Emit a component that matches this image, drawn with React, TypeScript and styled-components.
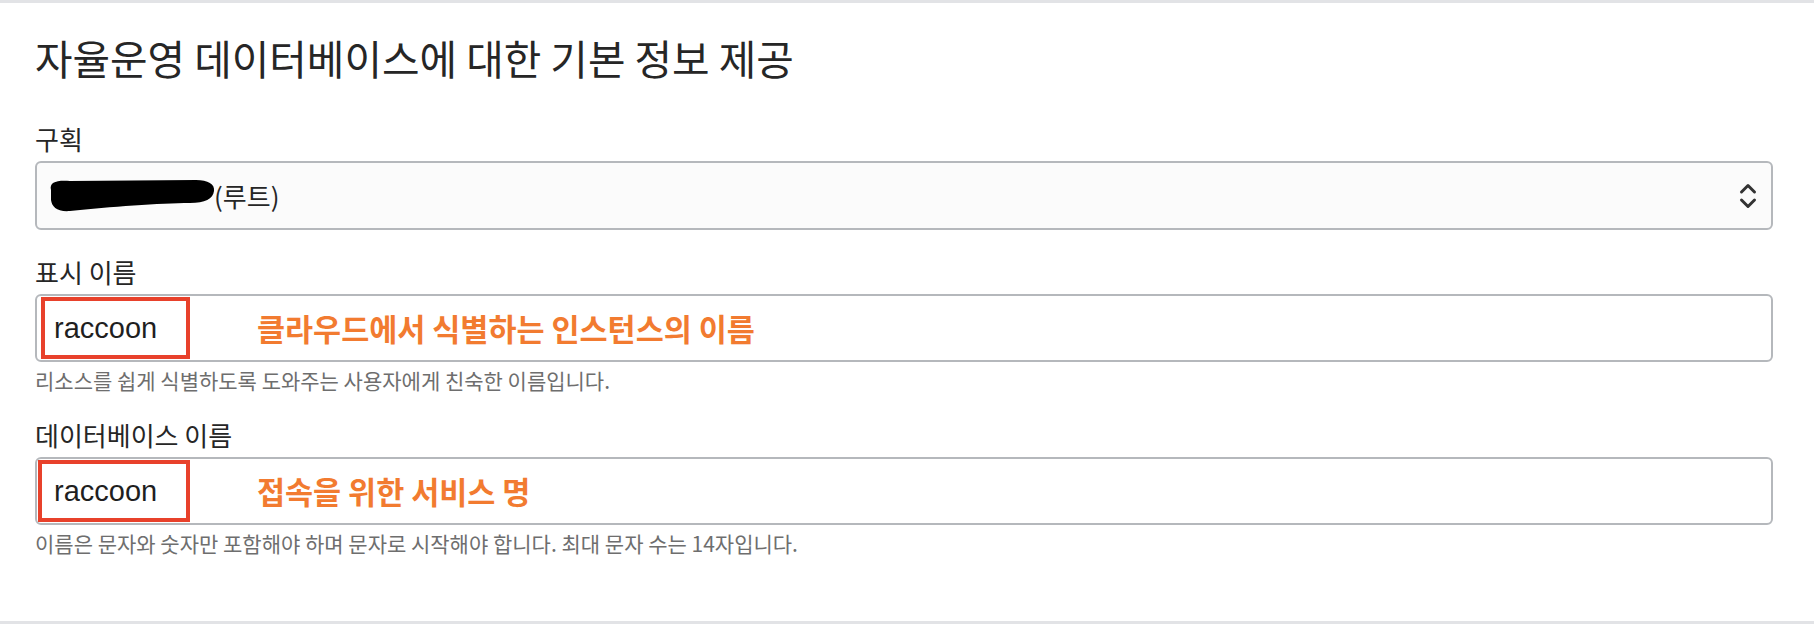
import styled, { createGlobalStyle } from 'styled-components';

const GlobalStyle = createGlobalStyle`
  html, body {
    margin: 0;
    padding: 0;
    background: #ffffff;
  }
  body {
    font-family: "Noto Sans CJK KR", "Noto Sans", sans-serif;
  }
`;

function Redaction() {
  return (
    <svg width="168" height="33" viewBox="0 0 168 33">
      <path
        d="M3 11 C1 3, 9 1, 22 2 L148 1 C160 1, 167 5, 166 12 C165 20, 157 24, 142 24 C112 24, 62 28, 22 32 C9 33, 4 28, 3 21 Z"
        fill="#000"
      />
    </svg>
  );
}

function Chevrons() {
  return (
    <svg width="18" height="26" viewBox="0 0 18 26">
      <path d="M2.5 9 L9 2.5 L15.5 9" fill="none" stroke="#333" strokeWidth="3" strokeLinecap="round" strokeLinejoin="round" />
      <path d="M2.5 17 L9 23.5 L15.5 17" fill="none" stroke="#333" strokeWidth="3" strokeLinecap="round" strokeLinejoin="round" />
    </svg>
  );
}

export default function App() {
  return (
    <>
      <GlobalStyle />
      <Panel>
        <Title>자율운영 데이터베이스에 대한 기본 정보 제공</Title>
        <Form>
          <Field>
            <Label>구획</Label>
            <Select>
              <SelectValue>
                <Redaction />
                <span>(루트)</span>
              </SelectValue>
              <Chevrons />
            </Select>
          </Field>

          <Field>
            <Label>표시 이름</Label>
            <Input>
              <Highlight $inset={4}>raccoon</Highlight>
              <Note>클라우드에서 식별하는 인스턴스의 이름</Note>
            </Input>
            <Help>리소스를 쉽게 식별하도록 도와주는 사용자에게 친숙한 이름입니다.</Help>
          </Field>

          <Field>
            <Label>데이터베이스 이름</Label>
            <Input>
              <Highlight $inset={1}>raccoon</Highlight>
              <Note>접속을 위한 서비스 명</Note>
            </Input>
            <Help>이름은 문자와 숫자만 포함해야 하며 문자로 시작해야 합니다. 최대 문자 수는 14자입니다.</Help>
          </Field>
        </Form>
      </Panel>
    </>
  );
}

const Panel = styled.div`
  box-sizing: border-box;
  height: 624px;
  border-top: 3px solid #e2e3e6;
  border-bottom: 3px solid #e2e3e6;
  padding: 31px 41px 0 35px;
`;

const Title = styled.h1`
  margin: 0;
  font-size: 40.8px;
  font-weight: 400;
  line-height: 48px;
  color: #262626;
`;

const Form = styled.div`
  display: flex;
  flex-direction: column;
  gap: 26px;
  margin-top: 41px;
`;

const Field = styled.div`
  display: flex;
  flex-direction: column;
`;

const Label = styled.div`
  font-size: 26px;
  line-height: 32px;
  color: #262626;
  margin-bottom: 6px;
`;

const Select = styled.div`
  box-sizing: border-box;
  height: 69px;
  display: flex;
  align-items: center;
  justify-content: space-between;
  padding: 0 14px 0 11px;
  border: 2px solid #b5b8bc;
  border-radius: 6px;
  background: #fbfbfb;
`;

const SelectValue = styled.div`
  display: flex;
  align-items: center;
  font-size: 26px;
  color: #262626;

  svg {
    margin-right: -2px;
  }
`;

const Input = styled.div`
  box-sizing: border-box;
  height: 68px;
  display: flex;
  align-items: center;
  border: 2px solid #b5b8bc;
  border-radius: 6px;
  background: #ffffff;
`;

const Highlight = styled.div<{ $inset: number }>`
  box-sizing: border-box;
  width: ${({ $inset }) => 153 - $inset}px;
  height: 62px;
  margin-left: ${({ $inset }) => $inset}px;
  display: flex;
  align-items: center;
  padding-left: ${({ $inset }) => 13 - $inset}px;
  border: 4px solid #e8412b;
  font-family: "Liberation Sans", Arial, sans-serif;
  font-size: 29px;
  color: #1f1f1f;
`;

const Note = styled.div`
  margin-left: 67px;
  font-size: 30.5px;
  font-weight: 700;
  color: #f27b30;
`;

const Help = styled.div`
  margin-top: 5px;
  font-size: 21px;
  line-height: 26px;
  color: #6e6e6e;
`;
